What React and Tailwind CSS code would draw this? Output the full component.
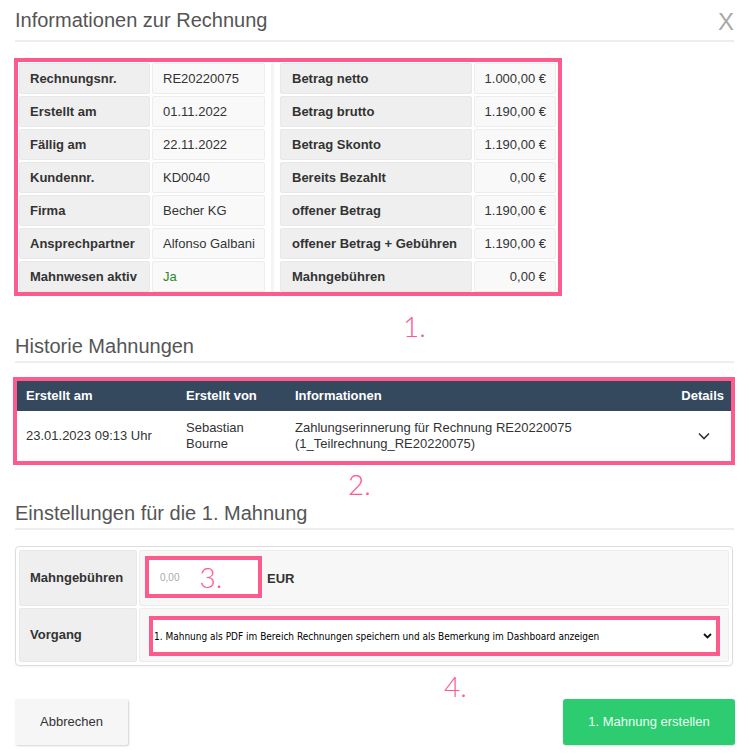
import React from 'react';

const leftRows = [
  ['Rechnungsnr.', 'RE20220075'],
  ['Erstellt am', '01.11.2022'],
  ['Fällig am', '22.11.2022'],
  ['Kundennr.', 'KD0040'],
  ['Firma', 'Becher KG'],
  ['Ansprechpartner', 'Alfonso Galbani'],
  ['Mahnwesen aktiv', 'Ja'],
];

const rightRows = [
  ['Betrag netto', '1.000,00 €'],
  ['Betrag brutto', '1.190,00 €'],
  ['Betrag Skonto', '1.190,00 €'],
  ['Bereits Bezahlt', '0,00 €'],
  ['offener Betrag', '1.190,00 €'],
  ['offener Betrag + Gebühren', '1.190,00 €'],
  ['Mahngebühren', '0,00 €'],
];

// pink step numbers drawn over the screenshot
const Mark = ({ n, className = '' }) => (
  <div className={`h-[18px] leading-[18px] text-[28px] font-light text-[#fd5a8e] font-['Lato',sans-serif] ${className}`}>
    {n}
  </div>
);

const SectionTitle = ({ children, className = '' }) => (
  <div className={`border-b-2 border-[#eeeeee] pb-[4px] ${className}`}>
    <h2 className="text-[20px] leading-[22px] text-[#555]">{children}</h2>
  </div>
);

const App = () => {
  return (
    <div className="w-[749px] h-[754px] bg-white px-[15px] text-[13px] text-[#333] font-['Liberation_Sans',Arial,sans-serif]">
      <div className="flex justify-between items-start h-[42px] pt-[9px] border-b-2 border-[#eeeeee]">
        <h1 className="text-[20px] leading-[22px] text-[#555]">Informationen zur Rechnung</h1>
        <span className="mt-[3px] text-[24px] leading-[20px] text-[#a8a8a8]">X</span>
      </div>

      <div className="mt-[16px] -ml-px w-[548px] border-4 border-[#fd5a8e] pt-px pl-px flex">
        <div className="grid grid-cols-[131px_113px] gap-[2px]">
          {leftRows.map(([label, value]) => (
            <React.Fragment key={label}>
              <div className="h-[31px] flex items-center pl-[10px] bg-[#efefef] border border-[#e8e8e8] rounded-[2px] font-bold">
                {label}
              </div>
              <div className={`h-[31px] flex items-center pl-[10px] bg-[#f9f9f9] border border-[#ededed] rounded-[2px] ${value === 'Ja' ? 'text-[#2a8a2a]' : ''}`}>
                {value}
              </div>
            </React.Fragment>
          ))}
        </div>
        <div className="w-[15px] flex justify-center">
          <div className="w-[3px] bg-[#f5f5f5]" />
        </div>
        <div className="grid grid-cols-[192px_82px] gap-[2px]">
          {rightRows.map(([label, value]) => (
            <React.Fragment key={label}>
              <div className="h-[31px] flex items-center pl-[11px] bg-[#efefef] border border-[#e8e8e8] rounded-[2px] font-bold">
                {label}
              </div>
              <div className="h-[31px] flex items-center justify-end pr-[9px] bg-[#f9f9f9] border border-[#ededed] rounded-[2px]">
                {value}
              </div>
            </React.Fragment>
          ))}
        </div>
      </div>

      <Mark n="1." className="mt-[21px] pl-[388px]" />
      <SectionTitle>Historie Mahnungen</SectionTitle>

      <div className="mt-[14px] -ml-[2px] w-[722px] border-4 border-[#fd5a8e]">
        <div className="grid grid-cols-[161px_109px_1fr_80px] h-[30px] items-center bg-[#34495e] text-white font-bold">
          <div className="pl-[9px]">Erstellt am</div>
          <div className="pl-[8px]">Erstellt von</div>
          <div className="pl-[8px]">Informationen</div>
          <div className="text-right pr-[7px]">Details</div>
        </div>
        <div className="grid grid-cols-[161px_109px_1fr_80px] h-[50px] items-center bg-white leading-[16px]">
          <div className="pl-[9px]">23.01.2023 09:13 Uhr</div>
          <div className="pl-[8px] pr-[8px]">Sebastian Bourne</div>
          <div className="pl-[8px] pr-[60px]">Zahlungserinnerung für Rechnung RE20220075 (1_Teilrechnung_RE20220075)</div>
          <div className="flex justify-end pr-[21px]">
            <svg width="12" height="8" viewBox="0 0 12 8" fill="none">
              <path d="M1 1.5 L6 6.5 L11 1.5" stroke="#333" strokeWidth="1.6" />
            </svg>
          </div>
        </div>
      </div>

      <Mark n="2." className="mt-[10px] pl-[333px]" />
      <SectionTitle className="mt-[9px]">Einstellungen für die 1. Mahnung</SectionTitle>

      <div className="mt-[16px] w-[718px] border border-[#dddddd] rounded-[4px] p-[3px] grid grid-cols-[118px_1fr] gap-[2px] shadow-[0_1px_2px_rgba(0,0,0,0.05)]">
        <div className="h-[56px] flex items-center pl-[10px] bg-[#efefef] border border-[#e8e8e8] rounded-[2px] font-bold">
          Mahngebühren
        </div>
        <div className="h-[56px] flex items-start pl-[5px] pt-[5px] bg-[#f7f7f7] border border-[#ededed] rounded-[2px]">
          <div className="w-[117px] h-[42px] border-4 border-[#fd5a8e] bg-white flex items-center pl-[11px]">
            <span className="text-[10px] text-[#aaa]">0,00</span>
            <Mark n="3." className="ml-[20px]" />
          </div>
          <span className="ml-[5px] mt-[13px] font-bold">EUR</span>
        </div>
        <div className="h-[54px] flex items-center pl-[10px] bg-[#efefef] border border-[#e8e8e8] rounded-[2px] font-bold">
          Vorgang
        </div>
        <div className="h-[54px] pl-[9px] pt-[7px] bg-[#f7f7f7] border border-[#ededed] rounded-[2px]">
          <div className="w-[571px] h-[40px] border-4 border-[#fd5a8e] bg-white flex items-center justify-between pl-[1px] pr-[4px] text-black">
            <span className="text-[10px] font-['DejaVu_Sans_Condensed','Liberation_Sans',sans-serif]">
              1. Mahnung als PDF im Bereich Rechnungen speichern und als Bemerkung im Dashboard anzeigen
            </span>
            <svg width="9" height="6" viewBox="0 0 9 6" fill="none">
              <path d="M1 1 L4.5 4.5 L8 1" stroke="#111" strokeWidth="1.8" />
            </svg>
          </div>
        </div>
      </div>

      <Mark n="4." className="mt-[11px] pl-[429px]" />

      <div className="mt-[4px] flex justify-between">
        <button className="w-[113px] h-[46px] bg-[#f6f6f6] rounded-[2px] shadow-[1px_1px_2px_rgba(0,0,0,0.18)] text-[13px] text-[#333]">
          Abbrechen
        </button>
        <button className="-mr-px w-[172px] h-[46px] bg-[#2ecc71] rounded-[3px] shadow-[0_1px_2px_rgba(0,0,0,0.15)] text-[13px] text-[#eafff2]">
          1. Mahnung erstellen
        </button>
      </div>
    </div>
  );
};

export default App;
